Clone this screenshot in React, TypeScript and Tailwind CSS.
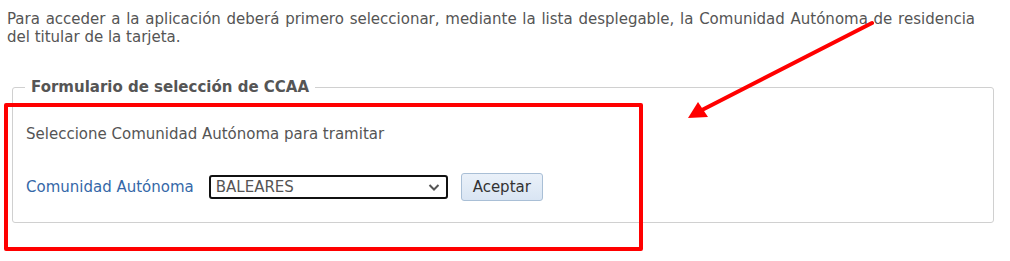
export default function App() {
  return (
    <div
      className="relative w-[1010px] h-[261px] bg-white overflow-hidden text-[15px] text-[#555]"
      style={{ fontFamily: '"DejaVu Sans", Verdana, sans-serif' }}
    >
      <div className="pl-[7px] pt-[10px]">
        <p className="w-[968px] leading-[18px] text-justify">
          Para acceder a la aplicación deberá primero seleccionar, mediante la lista desplegable, la Comunidad Autónoma de residencia del titular de la tarjeta.
        </p>

        <fieldset className="mt-[32px] ml-[5px] w-[982px] h-[145px] border border-[#d0d0d0] rounded-[3px] px-[13px]">
          <legend className="px-[6px] -ml-[1px] font-bold text-[#555] leading-[18px]">
            Formulario de selección de CCAA
          </legend>
          <div className="mt-[29px] leading-[18px]">Seleccione Comunidad Autónoma para tramitar</div>
          <div className="mt-[30px] flex items-center">
            <label className="text-[#3568a8] mr-[15px]">Comunidad Autónoma</label>
            <div className="relative w-[239px] h-[24px] border-2 border-[#111] rounded-[3px] flex items-center pl-[5px]">
              <span className="text-[#555]">BALEARES</span>
              <svg className="absolute right-[6px] top-[6px]" width="12" height="9" viewBox="0 0 12 9">
                <path d="M1.5 2 L6 6.5 L10.5 2" fill="none" stroke="#555" strokeWidth="2" />
              </svg>
            </div>
            <button className="ml-[13px] w-[82px] h-[28px] rounded-[3px] border border-[#a9bfd6] bg-gradient-to-b from-[#eaf1f9] to-[#d9e5f3] text-[#333]">
              Aceptar
            </button>
          </div>
        </fieldset>
      </div>

      {/* annotation overlay */}
      <div className="absolute left-[4px] top-[103px] w-[639px] h-[148px] border-4 border-[#ff0000] rounded-[2px]" />
      <svg className="absolute left-0 top-0" width="1010" height="261">
        <line x1="872" y1="23" x2="702" y2="110" stroke="#ff0000" strokeWidth="4" strokeLinecap="round" />
        <polygon points="688,118 698,102 708,117" fill="#ff0000" />
      </svg>
    </div>
  );
}
